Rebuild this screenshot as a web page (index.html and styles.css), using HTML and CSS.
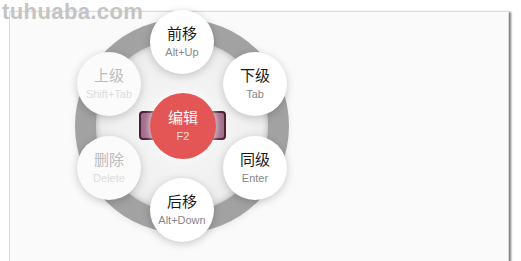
FILE: index.html
```html
<!DOCTYPE html>
<html>
<head>
<meta charset="utf-8">
<link rel="stylesheet" href="styles.css">
</head>
<body>
<div class="watermark">tuhuaba.com</div>
<div class="frame">
  <div class="wheel">
    <div class="ring"></div>
    <div class="bar"></div>
    <div class="node center"><span class="lbl">编辑</span><span class="key">F2</span></div>
    <div class="node n-up"><span class="lbl">前移</span><span class="key">Alt+Up</span></div>
    <div class="node n-child"><span class="lbl">下级</span><span class="key">Tab</span></div>
    <div class="node n-sib"><span class="lbl">同级</span><span class="key">Enter</span></div>
    <div class="node n-down"><span class="lbl">后移</span><span class="key">Alt+Down</span></div>
    <div class="node n-del off"><span class="lbl">删除</span><span class="key">Delete</span></div>
    <div class="node n-parent off"><span class="lbl">上级</span><span class="key">Shift+Tab</span></div>
  </div>
</div>
</body>
</html>
```
FILE: styles.css
```css
html, body {
  margin: 0;
  padding: 0;
  background: #ffffff;
  width: 521px;
  height: 261px;
  overflow: hidden;
  font-family: "Liberation Sans", "Noto Sans CJK SC", sans-serif;
}
.watermark {
  position: absolute;
  left: 2px;
  top: 0px;
  z-index: 5;
  font-family: "Liberation Sans", sans-serif;
  font-weight: bold;
  font-size: 22px;
  letter-spacing: 0.4px;
  line-height: 24px;
  color: #c4c4c4;
}
.frame {
  margin: 11px 0 0 9px;
  width: 500px;
  height: 260px;
  background: #fafafa;
  border: 1px solid #dcdcdc;
  box-shadow: 3px 0 2px -1px #7a7a7a;
  padding-left: 52px;
  box-sizing: border-box;
}
.wheel {
  position: relative;
  width: 240px;
  height: 240px;
  margin-top: -6px;
}
.ring {
  position: absolute;
  left: 13px;
  top: 13px;
  width: 214px;
  height: 214px;
  border-radius: 50%;
  box-sizing: border-box;
  border: 21px solid #a2a2a2;
  background: radial-gradient(circle, #f8f8f8 0%, #f0f0f0 55%, #e2e2e2 100%);
  box-shadow: inset 0 0 6px rgba(0,0,0,0.25), 0 2px 6px rgba(0,0,0,0.08);
}
.bar {
  position: absolute;
  left: 77px;
  top: 105px;
  width: 87px;
  height: 29px;
  box-sizing: border-box;
  border: 2px solid #4b2033;
  border-radius: 4px;
  background: #a06a88;
}
.node {
  position: absolute;
  width: 64px;
  height: 64px;
  border-radius: 50%;
  background: #ffffff;
  box-shadow: 0 2px 9px rgba(0,0,0,0.2);
  display: flex;
  flex-direction: column;
  align-items: center;
  justify-content: center;
  gap: 4px;
}
.lbl {
  font-size: 15px;
  line-height: 16px;
  color: #1a1a1a;
}
.key {
  font-size: 11px;
  line-height: 12px;
  color: #888888;
}
.off .lbl { color: #bcbcbc; }
.off .key { color: #dcdcdc; }
.off { background: #fbfbfb; }
.center {
  left: 88px;
  top: 87px;
  width: 66px;
  height: 66px;
  background: #e45656;
  box-shadow: 0 0 8px rgba(255,255,255,0.9);
}
.center .lbl { color: #ffffff; }
.center .key { color: #f6dede; }
.n-up { left: 88px; top: 4px; }
.n-child { left: 161px; top: 46px; }
.n-sib { left: 161px; top: 130px; }
.n-down { left: 88px; top: 172px; }
.n-del { left: 15px; top: 130px; }
.n-parent { left: 15px; top: 46px; }
```
